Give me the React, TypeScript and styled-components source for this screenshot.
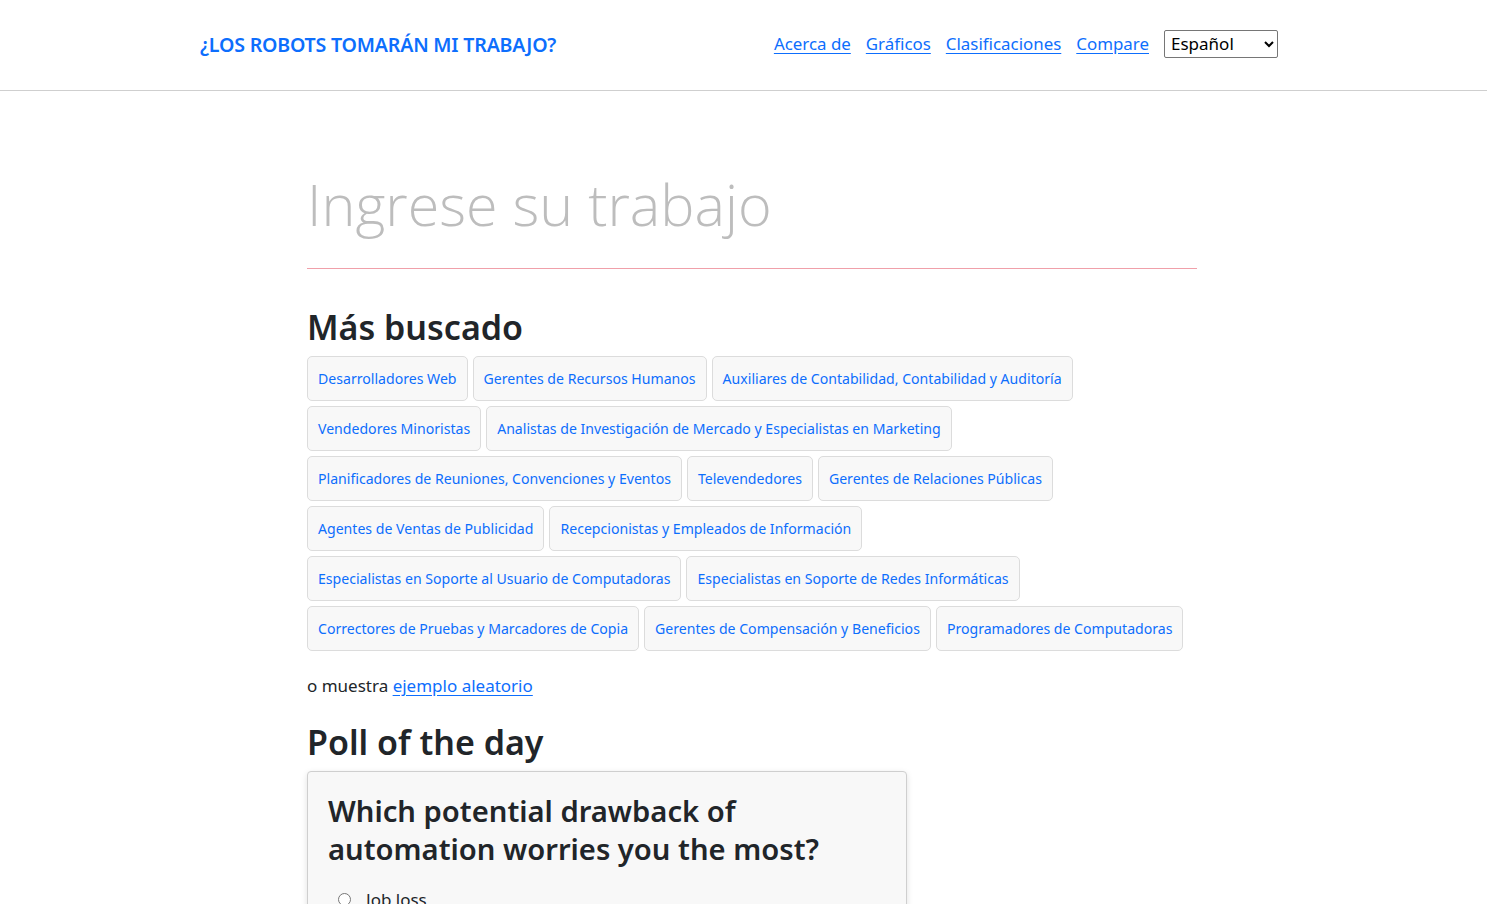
import React from "react";
import styled, { createGlobalStyle } from "styled-components";

const Global = createGlobalStyle`
  html, body { margin: 0; padding: 0; background: #fff; }
  body {
    font-family: "Noto Sans", "Open Sans", sans-serif;
    color: #212529;
    overflow: hidden;
  }
  * { box-sizing: border-box; }
`;

const Header = styled.header`
  height: 91px;
  border-bottom: 1px solid #cfcfcf;
`;

const HeaderInner = styled.div`
  width: 1078px;
  margin-left: calc(50% - 543.5px);
  height: 100%;
  display: flex;
  align-items: center;
  justify-content: space-between;
  padding-bottom: 3px;
`;

const Brand = styled.a`
  color: #0d6efd;
  font-size: 19.6px;
  font-weight: 600;
  text-decoration: none;
  text-transform: uppercase;
  letter-spacing: -0.2px;
  margin-top: 2px;
`;

const Nav = styled.nav`
  display: flex;
  align-items: center;
  gap: 15px;
`;

const NavLink = styled.a`
  color: #0d6efd;
  font-size: 16.9px;
  text-decoration: underline;
  text-underline-offset: 3px;
`;

const Select = styled.select`
  font-family: inherit;
  font-size: 17px;
  width: 114px;
  height: 28px;
  border: 1px solid #767676;
  border-radius: 2px;
  background: #fff;
  color: #000;
  padding: 0 2px;
`;

const Main = styled.main`
  width: 890px;
  margin-left: calc(50% - 436.5px);
  padding-top: 74px;
`;

const SearchInput = styled.input`
  display: block;
  width: 100%;
  border: none;
  border-bottom: 1px solid #f0a0aa;
  font-family: "Open Sans", "Noto Sans", sans-serif;
  font-weight: 300;
  font-size: 57.5px;
  color: #bbb;
  padding: 0 0 25px 0;
  outline: none;
  background: transparent;
  &::placeholder { color: #bdbdbd; }
`;

const H2 = styled.h2<{ $top: number; $bottom: number }>`
  font-size: 34px;
  font-weight: 600;
  margin: ${(p) => p.$top}px 0 ${(p) => p.$bottom}px 0;
  line-height: 41px;
  color: #212529;
`;

const Chips = styled.div`
  display: flex;
  flex-wrap: wrap;
  gap: 5px 5px;
`;

const Chip = styled.a`
  display: inline-block;
  border: 1px solid #dcdcdc;
  border-radius: 5px;
  background: #f8f8f8;
  color: #0d6efd;
  font-size: 14.1px;
  line-height: 23px;
  padding: 10px 10px;
  text-decoration: none;
`;

const Muestra = styled.p`
  font-size: 17px;
  margin: 23px 0 0 0;
  a { color: #0d6efd; text-decoration: underline; text-underline-offset: 3px; }
`;

const Card = styled.div`
  width: 600px;
  background: #f8f8f8;
  border: 1px solid #cfcfcf;
  border-radius: 4px;
  box-shadow: 0 2px 6px rgba(0, 0, 0, 0.12);
  padding: 20px 20px 20px;
`;

const CardTitle = styled.h3`
  font-size: 29.2px;
  font-weight: 600;
  line-height: 38px;
  margin: 0 0 20px 0;
`;

const RadioRow = styled.label`
  display: flex;
  align-items: center;
  gap: 15px;
  font-size: 17px;
  padding-left: 10px;
  input { margin: 0; width: 13px; height: 13px; }
`;

const jobs = [
  "Desarrolladores Web",
  "Gerentes de Recursos Humanos",
  "Auxiliares de Contabilidad, Contabilidad y Auditoría",
  "Vendedores Minoristas",
  "Analistas de Investigación de Mercado y Especialistas en Marketing",
  "Planificadores de Reuniones, Convenciones y Eventos",
  "Televendedores",
  "Gerentes de Relaciones Públicas",
  "Agentes de Ventas de Publicidad",
  "Recepcionistas y Empleados de Información",
  "Especialistas en Soporte al Usuario de Computadoras",
  "Especialistas en Soporte de Redes Informáticas",
  "Correctores de Pruebas y Marcadores de Copia",
  "Gerentes de Compensación y Beneficios",
  "Programadores de Computadoras",
];

export default function App() {
  return (
    <>
      <Global />
      <Header>
        <HeaderInner>
          <Brand href="#">¿Los robots tomarán mi trabajo?</Brand>
          <Nav>
            <NavLink href="#">Acerca de</NavLink>
            <NavLink href="#">Gráficos</NavLink>
            <NavLink href="#">Clasificaciones</NavLink>
            <NavLink href="#">Compare</NavLink>
            <Select defaultValue="es">
              <option value="es">Español</option>
              <option value="en">English</option>
            </Select>
          </Nav>
        </HeaderInner>
      </Header>
      <Main>
        <SearchInput placeholder="Ingrese su trabajo" />
        <H2 $top={38} $bottom={8}>Más buscado</H2>
        <Chips>
          {jobs.map((j) => (
            <Chip key={j} href="#">{j}</Chip>
          ))}
        </Chips>
        <Muestra>
          o muestra <a href="#">ejemplo aleatorio</a>
        </Muestra>
        <H2 $top={25} $bottom={8}>Poll of the day</H2>
        <Card>
          <CardTitle>Which potential drawback of automation worries you the most?</CardTitle>
          <RadioRow>
            <input type="radio" name="poll" />
            Job loss
          </RadioRow>
        </Card>
      </Main>
    </>
  );
}
